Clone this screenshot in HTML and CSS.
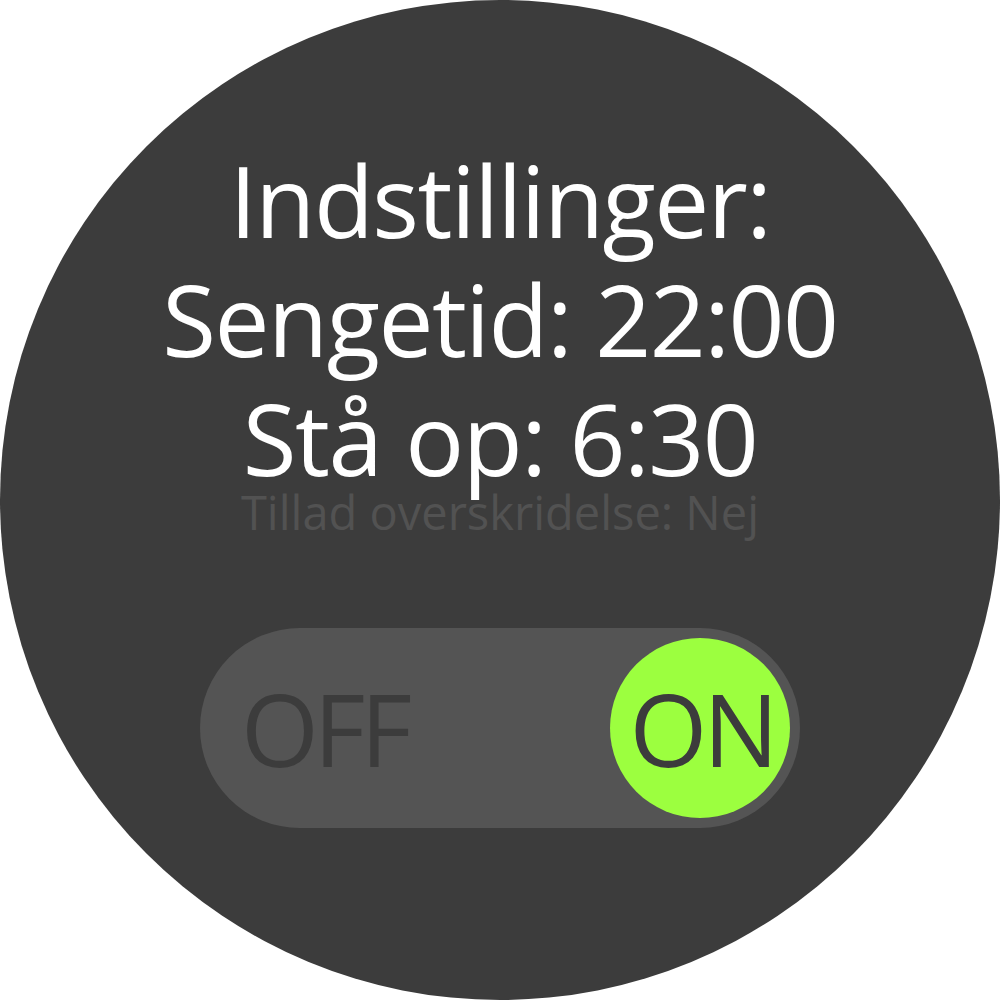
FILE: index.html
```html
<!DOCTYPE html>
<html lang="da">
<head>
<meta charset="utf-8">
<title>Indstillinger</title>
<link rel="stylesheet" href="styles.css">
</head>
<body>
<div class="watch">
  <div class="info">
    <div class="line">Indstillinger:</div>
    <div class="line">Sengetid: 22:00</div>
    <div class="line">Stå op: 6:30</div>
    <div class="sub">Tillad overskridelse: Nej</div>
  </div>
  <div class="toggle">
    <span class="off">OFF</span>
    <span class="knob"><span class="on">ON</span></span>
  </div>
</div>
</body>
</html>
```
FILE: styles.css
```css
html, body {
  margin: 0;
  padding: 0;
  background: #ffffff;
}
body {
  font-family: "Open Sans", "Noto Sans", sans-serif;
}
.watch {
  width: 1000px;
  height: 1000px;
  border-radius: 50%;
  background: #3c3c3c;
  display: flex;
  flex-direction: column;
  align-items: center;
  box-sizing: border-box;
  padding-top: 141px;
}
.info {
  display: flex;
  flex-direction: column;
  align-items: center;
}
.line {
  color: #ffffff;
  font-size: 98px;
  line-height: 119px;
  letter-spacing: -1.5px;
  white-space: nowrap;
}
.sub {
  color: #525252;
  font-size: 47px;
  line-height: 53px;
  margin-top: -12px;
  white-space: nowrap;
}
.toggle {
  margin-top: 89px;
  width: 600px;
  height: 200px;
  border-radius: 100px;
  background: #545454;
  display: flex;
  align-items: center;
  justify-content: space-between;
  box-sizing: border-box;
  padding: 10px 10px 10px 41px;
}
.off {
  color: #3c3c3c;
  font-size: 100px;
  line-height: 1;
  letter-spacing: -5px;
}
.knob {
  width: 180px;
  height: 180px;
  border-radius: 50%;
  background: #9cff3f;
  display: flex;
  align-items: center;
  justify-content: center;
}
.on {
  color: #3c3c3c;
  font-size: 100px;
  line-height: 1;
  letter-spacing: -4px;
  margin-right: -4px;
}
```
